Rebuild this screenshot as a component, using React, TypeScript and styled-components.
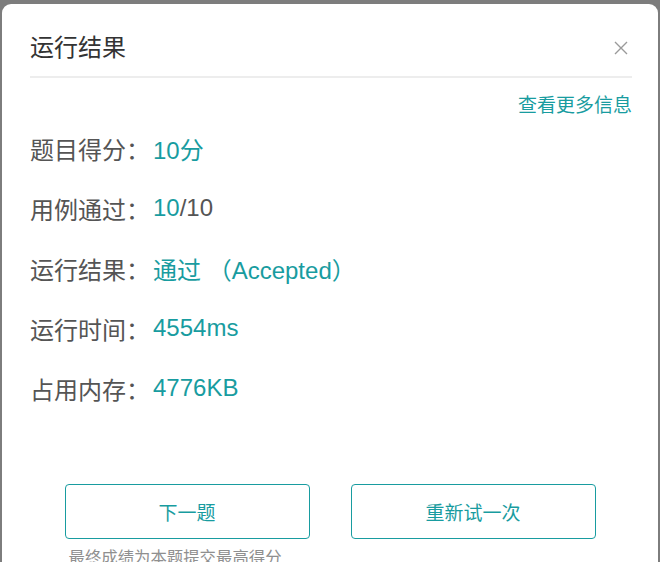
import React from "react";
import styled, { createGlobalStyle } from "styled-components";

const Global = createGlobalStyle`
  html, body { margin: 0; padding: 0; }
  body {
    background: #7d7d7d;
    overflow: hidden;
    font-family: "Liberation Sans", "Noto Sans CJK SC", sans-serif;
  }
`;

const TEAL = "#189ca0";

const Page = styled.div`
  width: 660px;
  height: 562px;
  padding: 4px 2px 0 2px;
  box-sizing: border-box;
  overflow: hidden;
`;

const Modal = styled.div`
  width: 656px;
  height: 558px;
  background: #fff;
  border-radius: 9px 9px 0 0;
  padding: 29px 26px 0 28px;
  box-sizing: border-box;
  overflow: hidden;
`;

const Header = styled.div`
  display: flex;
  align-items: center;
  justify-content: space-between;
  padding-bottom: 13px;
  border-bottom: 2px solid #ededed;
`;

const Title = styled.h2`
  margin: 0;
  font-size: 24px;
  line-height: 30px;
  font-weight: normal;
  color: #333;
`;

const Close = styled.button`
  border: 0;
  background: none;
  padding: 0;
  margin-right: 4px;
  width: 14px;
  height: 14px;
  display: flex;
  cursor: pointer;
`;

const MoreRow = styled.div`
  display: flex;
  justify-content: flex-end;
  margin-top: 16px;
`;

const MoreLink = styled.a`
  font-size: 19px;
  line-height: 24px;
  color: ${TEAL};
  text-decoration: none;
`;

const List = styled.div`
  display: flex;
  flex-direction: column;
`;

const Row = styled.div`
  height: 60px;
  display: flex;
  align-items: center;
  font-size: 24px;
  color: #555;
`;

const Label = styled.span`
  width: 123px;
  flex: none;
`;

const Value = styled.span<{ $muted?: boolean }>`
  color: ${(p) => (p.$muted ? "#555" : TEAL)};
`;

const Actions = styled.div`
  margin-top: 66px;
  display: flex;
  flex-direction: column;
  align-items: center;
`;

const Buttons = styled.div`
  display: flex;
  gap: 41px;
  margin-right: 2px;
`;

const Btn = styled.button`
  width: 245px;
  height: 55px;
  border: 1px solid ${TEAL};
  border-radius: 4px;
  background: #fff;
  color: ${TEAL};
  font-family: "Liberation Sans", "Noto Sans CJK SC", sans-serif;
  font-size: 19px;
  cursor: pointer;
`;

const Note = styled.div`
  width: 531px;
  margin-right: 2px;
  padding-left: 4px;
  box-sizing: border-box;
  margin-top: 7px;
  font-size: 16.4px;
  line-height: 22px;
  color: #8f8f8f;
`;

export default function App() {
  return (
    <Page>
      <Global />
      <Modal>
        <Header>
          <Title>运行结果</Title>
          <Close aria-label="关闭">
            <svg width="14" height="14" viewBox="0 0 14 14">
              <path d="M1 1 L13 13 M13 1 L1 13" stroke="#9a9a9a" strokeWidth="1.4" fill="none" />
            </svg>
          </Close>
        </Header>
        <MoreRow>
          <MoreLink href="#">查看更多信息</MoreLink>
        </MoreRow>
        <List>
          <Row>
            <Label>题目得分：</Label>
            <Value>10分</Value>
          </Row>
          <Row>
            <Label>用例通过：</Label>
            <Value>10</Value>
            <Value $muted>/10</Value>
          </Row>
          <Row>
            <Label>运行结果：</Label>
            <Value>通过 （Accepted）</Value>
          </Row>
          <Row>
            <Label>运行时间：</Label>
            <Value>4554ms</Value>
          </Row>
          <Row>
            <Label>占用内存：</Label>
            <Value>4776KB</Value>
          </Row>
        </List>
        <Actions>
          <Buttons>
            <Btn>下一题</Btn>
            <Btn>重新试一次</Btn>
          </Buttons>
          <Note>最终成绩为本题提交最高得分</Note>
        </Actions>
      </Modal>
    </Page>
  );
}
